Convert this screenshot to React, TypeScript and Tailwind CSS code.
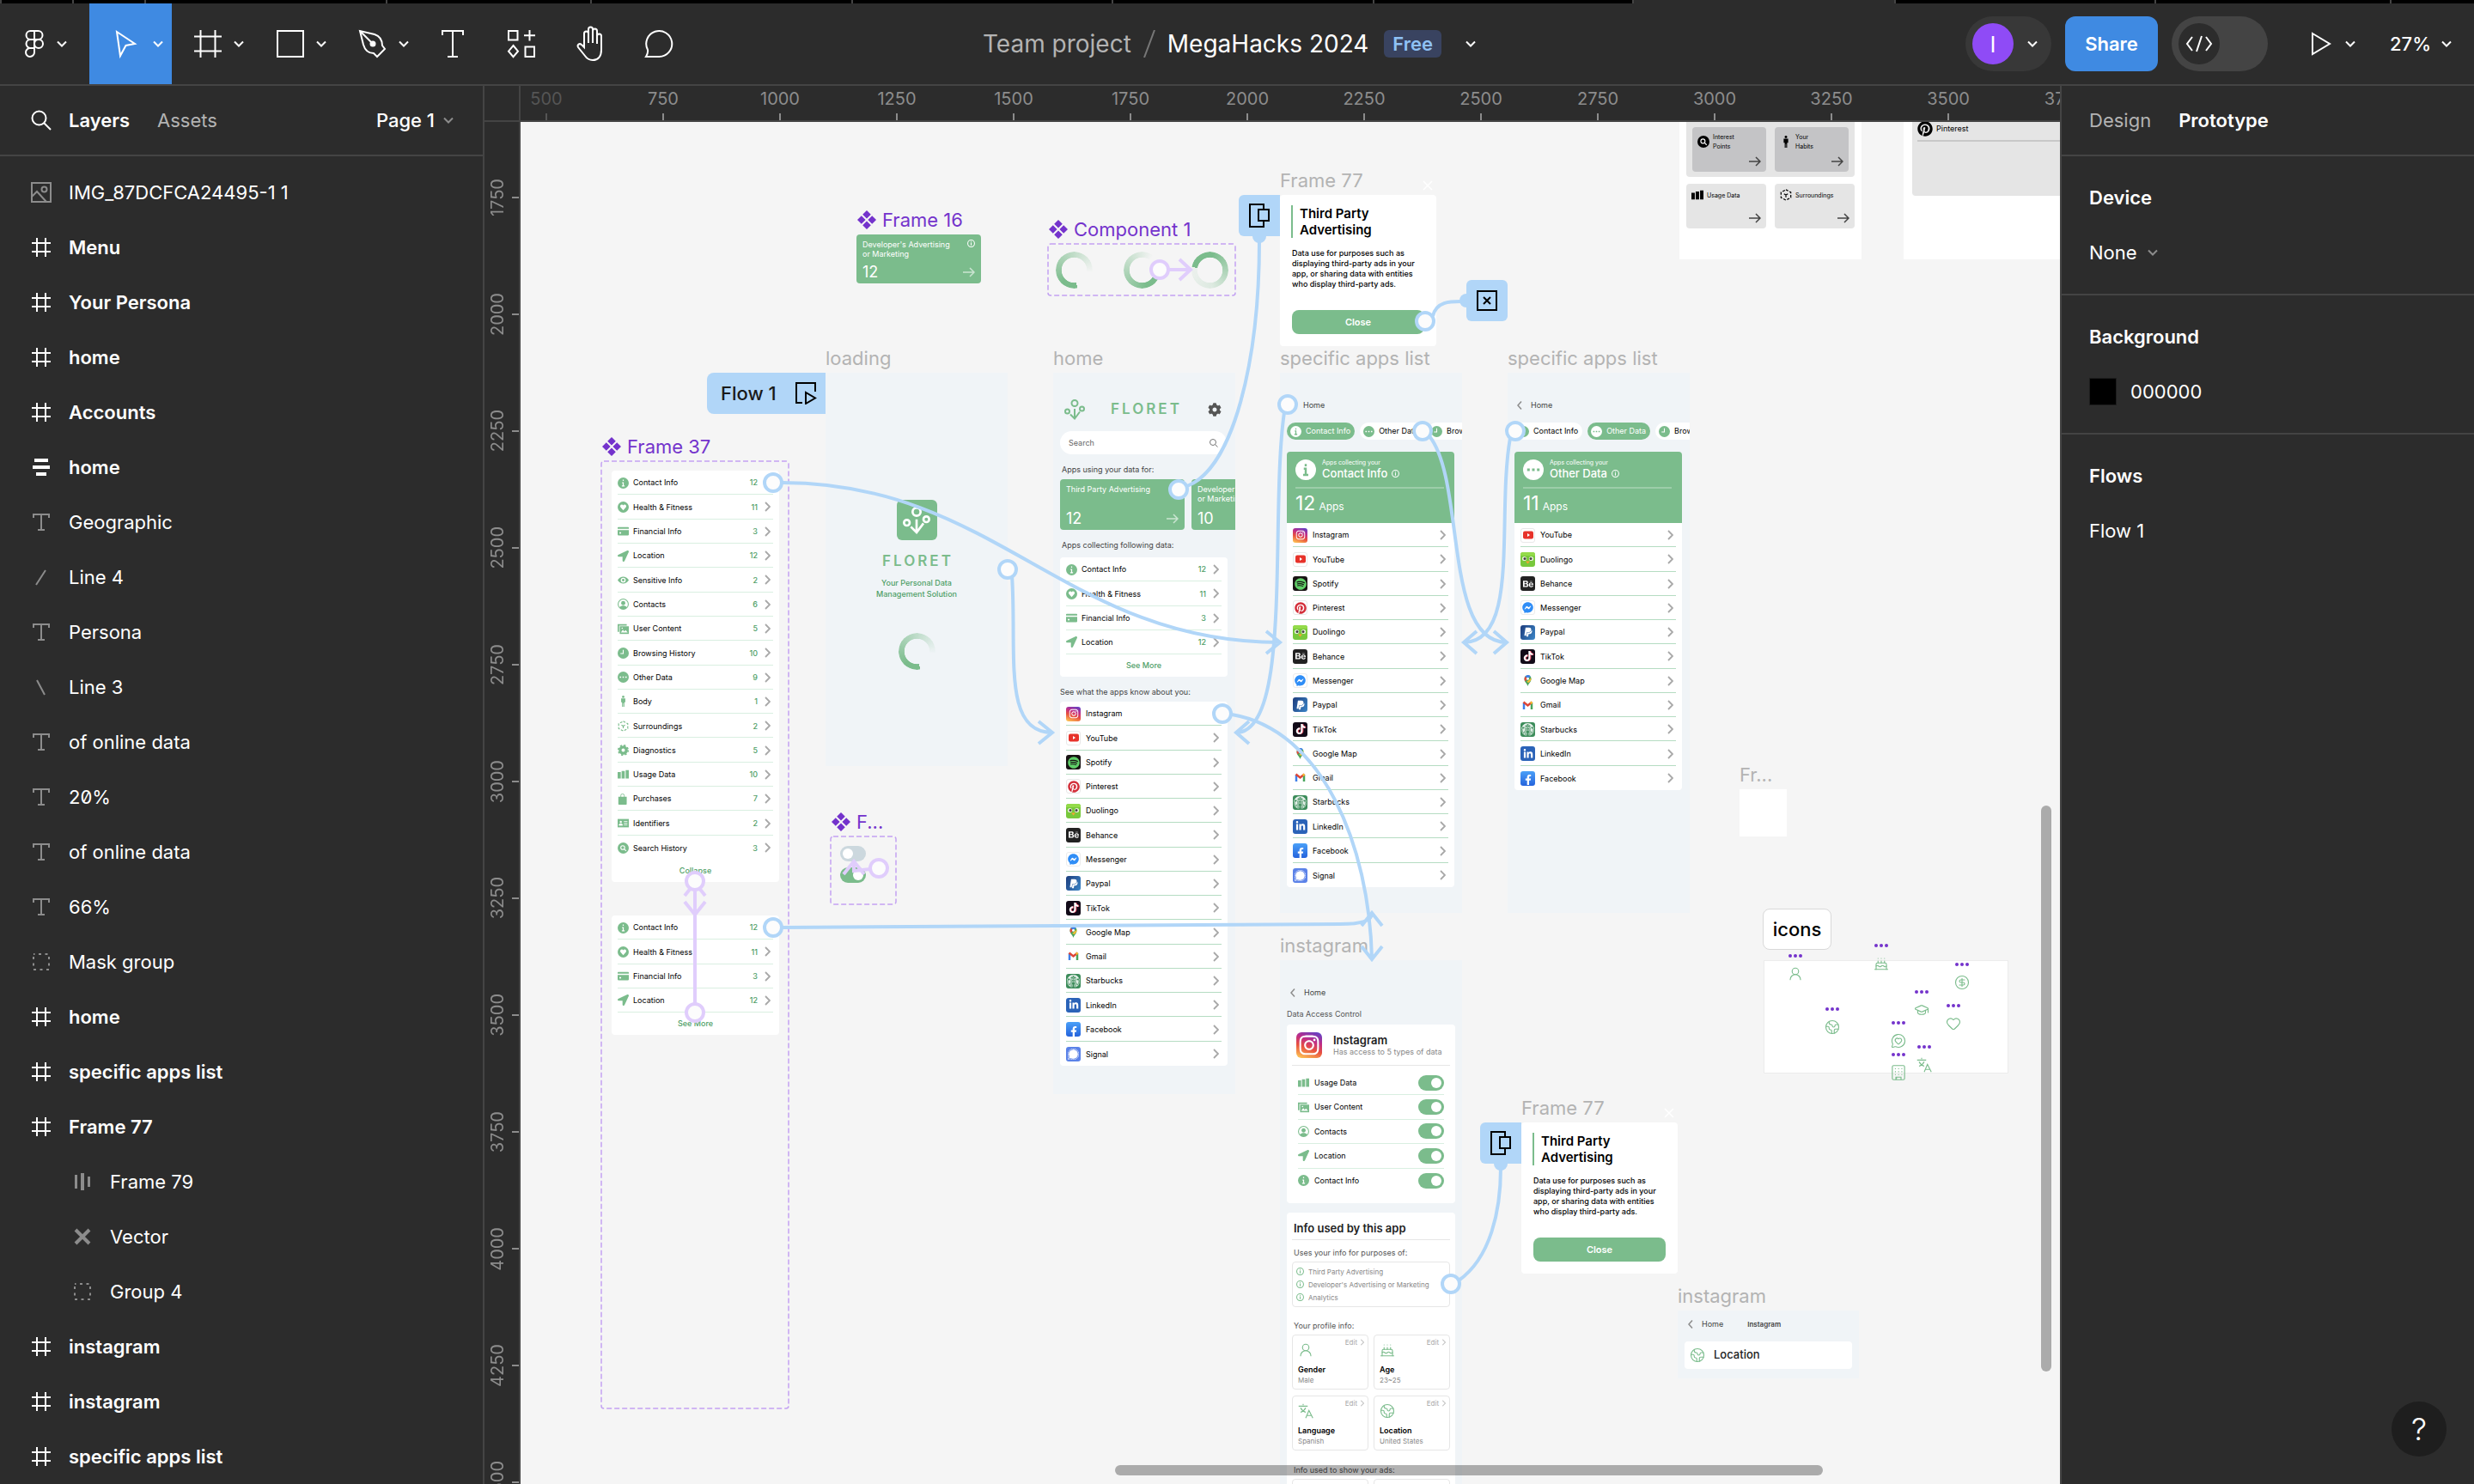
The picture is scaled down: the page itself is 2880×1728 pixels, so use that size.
import React, { useState } from 'react';
import {
  Cake, CircleDollarSign, Earth, GraduationCap, Heart, MessageCircleHeart, UserRound,
} from 'lucide-react';
import {
  FaBehance, FaCog, FaFacebookF, FaFacebookMessenger, FaInstagram, FaLinkedinIn,
  FaLocationArrow, FaPaypal, FaPinterest, FaSpotify, FaTiktok,
} from 'react-icons/fa';
import { SiSignal, SiStarbucks } from 'react-icons/si';

/* ---------- editor icons ---------- */

const Chevron = ({ className = 'text-white' }: { className?: string }) => (
  <svg className={`w-3 h-3 shrink-0 ${className}`} viewBox="0 0 12 12" fill="none" stroke="currentColor" strokeWidth="2">
    <path d="M1 3.500l5 5 5-5" />
  </svg>
);

const toolIcons: Record<string, React.ReactNode> = {
  figma: (
    <>
      <path d="M16 1h-4.500a5 5 0 0 0 0 10H16zM16 1h4.500a5 5 0 0 1 0 10H16zM16 11h-4.500a5 5 0 0 0 0 10H16z" />
      <path d="M11.500 21a5 5 0 1 0 4.500 5v-5z" />
      <circle cx="21" cy="16" r="5" />
    </>
  ),
  move: <path d="M6 2l21 14-10.500 2L10 30z" strokeLinejoin="miter" />,
  frame: <path d="M7.500 0v32M24.500 0v32M0 7.500h32M0 24.500h32" />,
  rect: <path d="M1 1h30v30H1z" />,
  pen: (
    <>
      <path d="M1 1l4 16c2 7 7 10 12 10l4 4 9-9-3-4c0-6-3-11-9-13z" />
      <path d="M1 1l14 14" />
      <circle cx="16" cy="16" r="2.500" fill="currentColor" />
    </>
  ),
  text: <path d="M4 6V1h24v5M16 1v30M10 31h12" />,
  resources: <path d="M1 1h10.500v10.500H1zM20.500 19.500H31V31H20.500zM25.500 0v12.500M19 6.200h13M6.500 18l5.500 6.700-5.500 6.500L1 24.700z" />,
  hand: (
    <path d="M9 20V4a2.500 2.500 0 0 1 5 0v11V-1a2.500 2.500 0 0 1 5 0v16V1a2.500 2.500 0 0 1 5 0v15V7a2.500 2.500 0 0 1 5 0v16c0 8-4 12-10 12-5 0-7-2-9-5L2 20c-1.500-3 1.500-5 4-3z" />
  ),
  comment: <path d="M1 31h15a15 15 0 1 0-13-8c.5 3 0 5-2 8z" />,
};

const ToolIcon = ({ name }: { name: string }) => (
  <svg className="w-8 h-8 shrink-0 overflow-visible" viewBox="0 0 32 32" fill="none" stroke="currentColor" strokeWidth="2">
    {toolIcons[name]}
  </svg>
);

const layerIcons: Record<string, React.ReactNode> = {
  image: (
    <g stroke="#8c8c8c">
      <path d="M1 1h22v22H1z" />
      <circle cx="15.500" cy="8.500" r="3" />
      <path d="M1 17l6-6 11 12" />
    </g>
  ),
  frame: <path d="M7 1v22M17 1v22M1 7h22M1 17h22" stroke="#fff" />,
  stack: <path d="M4 2h16v4H4zM2 10h20v4H2zM6 18h12v4H6z" fill="#fff" stroke="none" />,
  text: <path d="M3 7V3h18v4M12 3v18M8 21h8" stroke="#8c8c8c" />,
  line: <path d="M6 21L17 4" stroke="#8c8c8c" />,
  backline: <path d="M7 4l9 17" stroke="#8c8c8c" />,
  group: <path d="M3 3h18v18H3z" stroke="#8c8c8c" strokeDasharray="3 4.500" strokeDashoffset="1.500" />,
  bars: <path d="M3 4h3v16H3zM10 2h4v20h-4zM18 6h3v12h-3z" fill="#8c8c8c" stroke="none" />,
  vector: <path d="M4 4l16 16M20 4L4 20" stroke="#8c8c8c" strokeWidth="4" />,
};

const layers = [
  { icon: 'image', name: 'IMG_87DCFCA24495-1 1' },
  { icon: 'frame', name: 'Menu', bold: true },
  { icon: 'frame', name: 'Your Persona', bold: true },
  { icon: 'frame', name: 'home', bold: true },
  { icon: 'frame', name: 'Accounts', bold: true },
  { icon: 'stack', name: 'home', bold: true },
  { icon: 'text', name: 'Geographic' },
  { icon: 'line', name: 'Line 4' },
  { icon: 'text', name: 'Persona' },
  { icon: 'backline', name: 'Line 3' },
  { icon: 'text', name: 'of online data' },
  { icon: 'text', name: '20%' },
  { icon: 'text', name: 'of online data' },
  { icon: 'text', name: '66%' },
  { icon: 'group', name: 'Mask group' },
  { icon: 'frame', name: 'home', bold: true },
  { icon: 'frame', name: 'specific apps list', bold: true },
  { icon: 'frame', name: 'Frame 77', bold: true },
  { icon: 'bars', name: 'Frame 79', nested: true },
  { icon: 'vector', name: 'Vector', nested: true },
  { icon: 'group', name: 'Group 4', nested: true },
  { icon: 'frame', name: 'instagram', bold: true },
  { icon: 'frame', name: 'instagram', bold: true },
  { icon: 'frame', name: 'specific apps list', bold: true },
];

/* ---------- editor chrome ---------- */

const tools = [
  { name: 'frame', label: 'Frame' },
  { name: 'rect', label: 'Rectangle' },
  { name: 'pen', label: 'Pen' },
];
const plainTools = [
  { name: 'text', label: 'Text' },
  { name: 'resources', label: 'Resources' },
  { name: 'hand', label: 'Hand' },
  { name: 'comment', label: 'Comment' },
];

const Toolbar = () => (
  <header className="shrink-0 border-b-2 border-[#444]">
    {/* browser tabs edge */}
    <div className="flex h-1 bg-black" aria-hidden="true">
      <div className="flex-[83] border-l-2 border-[#444]" />
      <div className="flex-[82] border-l-2 border-[#444]" />
      <div className="flex-[282] border-l-2 border-[#444]" />
      <div className="flex-[238] border-l-2 border-[#444]" />
      <div className="flex-[304] border-l-2 border-[#444]" />
      <div className="flex-[304] border-l-2 border-[#444]" />
      <div className="flex-[304] border-l-2 border-[#444]" />
      <div className="flex-[303] border-l-2 border-[#444]" />
      <div className="flex-[305] bg-[#2c2c2c] border-l-2 border-[#444]" />
      <div className="flex-[304] border-l-2 border-[#444]" />
      <div className="flex-[274] border-l-2 border-[#444]" />
      <div className="flex-[97] border-l-2 border-[#444]" />
    </div>
    <div className="flex items-stretch h-[94px]">
      <div className="flex flex-1">
        <button aria-label="Main menu" className="w-[104px] pl-6 flex items-center gap-[10px]">
          <ToolIcon name="figma" /><Chevron />
        </button>
        <button aria-label="Move" className="w-24 pl-[26px] flex items-center gap-4 bg-[#3f8ae2]">
          <ToolIcon name="move" /><Chevron />
        </button>
        {tools.map(t => (
          <button key={t.name} aria-label={t.label} className="w-24 pl-[26px] flex items-center gap-[14px]">
            <ToolIcon name={t.name} /><Chevron />
          </button>
        ))}
        {plainTools.map(t => (
          <button key={t.name} aria-label={t.label} className="w-20 pr-0.5 flex items-center justify-center">
            <ToolIcon name={t.name} />
          </button>
        ))}
      </div>
      <div className="flex items-center text-[28px] pl-2">
        <a href="#project" className="text-[#b3b3b3]">Team project</a>
        <svg className="w-3.5 h-8 mx-3.5" viewBox="0 0 14 32" stroke="#777" strokeWidth="2"><path d="M13 0L1 32" /></svg>
        <span>MegaHacks 2024</span>
        <span className="ml-[18px] h-8 px-[10px] rounded-md bg-[#394360] text-[#8fc1f5] text-[22px] leading-8 font-semibold">Free</span>
        <button aria-label="File options" className="ml-7 flex"><Chevron /></button>
      </div>
      <div className="flex flex-1 items-center justify-end gap-4 pr-[26px]">
        <button aria-label="Account" className="w-[100px] h-16 pl-2 rounded-full bg-[#383838] flex items-center gap-4">
          <span className="w-12 h-12 rounded-full bg-[#8f4bf6] text-[26px] flex items-center justify-center">I</span>
          <Chevron />
        </button>
        <button className="w-[108px] h-16 rounded-xl bg-[#3f8ae2] text-[22px] font-semibold">Share</button>
        <button role="switch" aria-checked="false" aria-label="Dev mode" className="w-28 h-16 pl-2 rounded-full bg-[#444] flex items-center">
          <span className="w-12 h-12 rounded-full bg-[#2c2c2c] flex items-center justify-center">
            <svg className="w-8 h-5" viewBox="0 0 32 20" fill="none" stroke="#fff" strokeWidth="2"><path d="M8 2L2 10l6 8M24 2l6 8-6 8M19 1l-6 18" /></svg>
          </span>
        </button>
        <button aria-label="Present" className="ml-[34px] flex items-center gap-4">
          <svg className="w-6 h-7" viewBox="0 0 24 28" fill="none" stroke="#fff" strokeWidth="2"><path d="M2 2l20 12L2 26z" /></svg>
          <Chevron />
        </button>
        <button className="ml-6 flex items-center gap-3 text-[22px] font-medium">27%<Chevron /></button>
      </div>
    </div>
  </header>
);

const LayersPanel = () => (
  <aside className="w-[564px] shrink-0 border-r-2 border-[#444] overflow-hidden">
    <div className="flex items-center h-[82px] pl-9 pr-[34px] border-b-2 border-[#444]">
      <svg className="w-6 h-6" viewBox="0 0 24 24" fill="none" stroke="#fff" strokeWidth="2"><circle cx="9.500" cy="9.500" r="8" /><path d="M15 15l8 8" /></svg>
      <button className="ml-5 font-semibold">Layers</button>
      <button className="ml-8 text-[#b3b3b3]">Assets</button>
      <button className="ml-auto flex items-center gap-2.5 font-medium">Page 1<Chevron className="text-[#8c8c8c]" /></button>
    </div>
    <ul className="pt-2.5 slashed-zero">
      {layers.map((l, i) => (
        <li key={i}>
          <button className={`flex items-center w-full h-16 text-left ${l.nested ? 'pl-[84px]' : 'pl-9'}`}>
            <svg className="w-6 h-6 mr-5" viewBox="0 0 24 24" fill="none" strokeWidth="2">{layerIcons[l.icon]}</svg>
            <span className={l.bold ? 'font-semibold' : ''}>{l.name}</span>
          </button>
        </li>
      ))}
    </ul>
  </aside>
);

const PrototypePanel = () => (
  <aside className="w-[482px] shrink-0 border-l-2 border-[#444] flex flex-col">
    <div className="flex items-center h-[82px] px-8 gap-8 border-b-2 border-[#444]">
      <button className="text-[#b3b3b3]">Design</button>
      <button className="font-semibold">Prototype</button>
    </div>
    <section className="px-8 h-[162px] pt-4 border-b-2 border-[#444]">
      <label htmlFor="device" className="block h-16 leading-[64px] font-semibold">Device</label>
      <div className="flex items-center h-16">
        <select id="device" className="appearance-none bg-transparent outline-none mr-3"><option>None</option></select>
        <Chevron className="text-[#8c8c8c]" />
      </div>
    </section>
    <section className="px-8 h-[162px] pt-4 border-b-2 border-[#444]">
      <h2 className="h-16 leading-[64px] font-semibold">Background</h2>
      <div className="flex items-center h-16 gap-4"><span className="w-8 h-8 bg-black border border-[#1e1e1e]" />000000</div>
    </section>
    <section className="px-8 pt-4">
      <h2 className="h-16 leading-[64px] font-semibold">Flows</h2>
      <a href="#flow-1" className="block h-16 leading-[64px]">Flow 1</a>
    </section>
    <button aria-label="Help" className="mt-auto ml-auto mr-8 mb-8 w-16 h-16 rounded-full bg-[#1e1e1e] text-[36px] font-light">?</button>
  </aside>
);

const hTicks = ['500', '750', '1000', '1250', '1500', '1750', '2000', '2250', '2500', '2750', '3000', '3250', '3500', '3750'];
const vTicks = ['1750', '2000', '2250', '2500', '2750', '3000', '3250', '3500', '3750', '4000', '4250', '4500'];

/* ---------- canvas drawing helpers ---------- */

const Diamonds = () => (
  <svg className="w-[22px] h-[22px]" viewBox="0 0 22 22" fill="#7433cc">
    <path d="M11 0l4.800 4.800L11 9.600 6.200 4.800zM11 12.400l4.800 4.800L11 22l-4.800-4.800zM4.800 6.200L9.600 11l-4.800 4.800L0 11zM17.200 6.200L22 11l-4.800 4.800-4.800-4.800z" />
  </svg>
);

const FrameLabel = ({ children, component }: { children: string; component?: boolean }) => (
  <div className={`absolute left-0 bottom-full h-[34px] flex items-center gap-[7px] text-[22px] whitespace-nowrap ${component ? 'text-[#7433cc] pl-px' : 'text-[#b3b3b3]'}`}>
    {component && <Diamonds />}{children}
  </div>
);

/* dashed outline of a component set */
const DashedOutline = () => (
  <svg className="absolute left-0 top-0 w-full h-full overflow-visible">
    <rect width="100%" height="100%" rx="3" fill="none" stroke="#c3a1f2" strokeWidth="1.500" strokeDasharray="6 3" />
  </svg>
);

const glyphs: Record<string, React.ReactNode> = {
  info: <><circle cx="8" cy="8" r="8" /><path d="M8 3v2M6.500 7.500H8V12M6 12.200h4" stroke="#fff" strokeWidth="1.500" fill="none" /></>,
  heart: <><circle cx="8" cy="8" r="8" /><path d="M8 12.500L4 8a2.300 2.300 0 0 1 4-2.500A2.300 2.300 0 0 1 12 8z" fill="#fff" /></>,
  card: <><path d="M1 2h14a1 1 0 0 1 1 1v1.500H0V3a1 1 0 0 1 1-1zM0 6.500h16V13a1 1 0 0 1-1 1H1a1 1 0 0 1-1-1z" /><path d="M2.500 9.500H5v2H2.500z" fill="#fff" /></>,
  eye: <><path d="M0 8c4-6.500 12-6.500 16 0-4 6.500-12 6.500-16 0z" /><circle cx="8" cy="8" r="3.500" fill="#fff" /><circle cx="8" cy="8" r="1.800" /></>,
  contact: <><circle cx="8" cy="8" r="7.300" fill="none" stroke="currentColor" strokeWidth="1.300" /><circle cx="8" cy="6.500" r="3" /><path d="M2.500 12.500c3-3 8-3 11 0a7 7 0 0 1-11 0z" /></>,
  photos: <><path d="M0 1h13v2H2v9H0z" /><path d="M3 4h13v11H3z" /><path d="M4.500 13l3-4 2 2.500 2-2 3 3.500z" fill="#fff" /><circle cx="6.500" cy="6.800" r="1" fill="#fff" /></>,
  clock: <><circle cx="8" cy="8" r="8" /><path d="M8 3.500V8.500H4" stroke="#fff" strokeWidth="1.300" fill="none" /></>,
  dots: <><circle cx="8" cy="8" r="8" /><path d="M3 7h2v2H3zM7 7h2v2H7zM11 7h2v2h-2z" fill="#fff" /></>,
  person: <><circle cx="8" cy="1.800" r="1.700" /><path d="M5 4h6v5.500H9.600V16H8.300v-5h-.6v5H6.400V9.500H5z" /></>,
  cube: <g fill="none" stroke="currentColor" strokeWidth="1.400"><path d="M8 1l6.500 3.500v7L8 15l-6.500-3.500v-7z" strokeDasharray="3.500 2" /><path d="M5.500 6.500L8 8l2.500-1.500M8 8v3" /></g>,
  gear: <><circle cx="8" cy="8" r="4.500" fill="none" stroke="currentColor" strokeWidth="4" /><circle cx="8" cy="8" r="7" fill="none" stroke="currentColor" strokeWidth="2" strokeDasharray="2.750 2.750" /></>,
  bars: <path d="M0 5h4.500v9H0zM5.700 3.500h4.500V14H5.700zM11.500 2H16v12h-4.500z" />,
  bag: <><path d="M1 4.500h12V15a1 1 0 0 1-1 1H2a1 1 0 0 1-1-1z" /><path d="M4.500 5V3a2.500 2.500 0 0 1 5 0v2" fill="none" stroke="currentColor" /></>,
  id: <><path d="M0 2h16v12H0z" /><path d="M2 11c0-3 5-3 5 0zM9 5.500h5M9 8h5M9 10.500h5" stroke="#fff" fill="#fff" /><circle cx="4.500" cy="6" r="1.500" fill="#fff" /></>,
  search: <><circle cx="8" cy="8" r="8" /><circle cx="7.300" cy="7.300" r="2.800" fill="none" stroke="#fff" strokeWidth="1.300" /><path d="M9.300 9.300l3 3" stroke="#fff" strokeWidth="1.300" /></>,
};

const Glyph = ({ name, className = 'w-[13px] h-[13px] text-[#7bbc8c]' }: { name: string; className?: string }) => {
  if (name === 'location') return <FaLocationArrow className={`shrink-0 ${className}`} />;
  return <svg className={`shrink-0 ${className}`} viewBox="0 0 16 16" fill="currentColor">{glyphs[name]}</svg>;
};

/* white badge with a green sign, used on green backgrounds */
const Badge = ({ icon, className }: { icon: string; className: string }) => (
  <svg className={`shrink-0 ${className}`} viewBox="0 0 16 16">
    <circle cx="8" cy="8" r="8" fill="#fff" />
    {icon === 'info'
      ? <path d="M8 3.500v1.800M6.500 7.200H8V12M6 12h4" stroke="#7bbc8c" strokeWidth="1.600" fill="none" />
      : <path d="M3.200 7h2v2h-2zM7 7h2v2H7zM10.800 7h2v2h-2z" fill="#7bbc8c" />}
  </svg>
);

const InfoOutline = ({ className }: { className: string }) => (
  <svg className={className} viewBox="0 0 16 16" fill="none" stroke="currentColor" strokeWidth="1.800">
    <circle cx="8" cy="8" r="7" /><path d="M8 4v2M8 7v5" />
  </svg>
);

const RowArrow = () => (
  <svg className="w-[7px] h-3 shrink-0" viewBox="0 0 7 12" fill="none" stroke="#a8a8a8" strokeWidth="1.800"><path d="M1 1l5 5-5 5" /></svg>
);

const BackArrow = () => (
  <svg className="w-[6px] h-[10px]" viewBox="0 0 6 10" fill="none" stroke="#8c8c8c" strokeWidth="1.500"><path d="M5 0.500L1 5l4 4.500" /></svg>
);

const LongArrow = ({ className }: { className: string }) => (
  <svg className={`w-[14px] h-3 ${className}`} viewBox="0 0 14 12" fill="none" stroke="currentColor" strokeWidth="1.500"><path d="M0 6h13M8 1l5 5-5 5" /></svg>
);

const FloretMark = ({ className }: { className: string }) => (
  <svg className={className} viewBox="0 0 24 24" fill="none" stroke="currentColor" strokeWidth="2">
    <circle cx="12" cy="4.500" r="3.500" /><circle cx="3.500" cy="14" r="2.500" /><circle cx="20.500" cy="11" r="2.500" />
    <path d="M12 11v11M7 17.500l5 5 6-8" />
  </svg>
);

const GlobeIcon = ({ className }: { className: string }) => <Earth className={className} strokeWidth={1.500} />;

const TranslateIcon = ({ className }: { className: string }) => (
  <svg className={className} viewBox="0 0 24 24" fill="none" stroke="currentColor" strokeWidth="1.500">
    <path d="M1 4.500h14M8 1v2M4 7c2 4 5 6 8 7M12 7c-2 4-5 6-8 7M12 23l5-12 6 12M14 19h7" />
  </svg>
);

const BuildingIcon = ({ className }: { className: string }) => (
  <svg className={className} viewBox="0 0 24 24" fill="none" stroke="currentColor" strokeWidth="1.500">
    <rect x="2.500" y="1" width="19" height="22" rx="2" />
    <path d="M8 23v-4h8v4M9 22v-3" />
    <path d="M6.500 6h12M6.500 10.500h12M6.500 15h12" strokeDasharray="1.500 3.500" />
  </svg>
);

/* ---------- app logos ---------- */

const tile = 'w-[17px] h-[17px] rounded-[3px] shrink-0 flex items-center justify-center text-white text-[12px]';

const appLogos: Record<string, React.ReactNode> = {
  Instagram: <span className={`${tile} bg-[linear-gradient(20deg,#fdc254_5%,#e8503f_40%,#c02d87_65%,#5245cf)]`}><FaInstagram /></span>,
  YouTube: (
    <span className={`${tile} bg-white border border-[#e8e8e8]`}>
      <svg className="w-3 h-[10px]" viewBox="0 0 12 10"><rect width="12" height="9" y="0.500" rx="2" fill="#e7322a" /><path d="M5 3l3 2-3 2z" fill="#fff" /></svg>
    </span>
  ),
  Spotify: <span className={`${tile} bg-[#191414]`}><FaSpotify className="text-[#5fd068] text-[14px]" /></span>,
  Pinterest: <span className={`${tile} bg-white border border-[#e8e8e8]`}><FaPinterest className="text-[#d32f3a] text-[14px]" /></span>,
  Duolingo: (
    <svg className="w-[17px] h-[17px] shrink-0" viewBox="0 0 17 17">
      <rect width="17" height="17" rx="3" fill="#78c83c" /><path d="M0 4V3a3 3 0 0 1 3-3h11a3 3 0 0 1 3 3v1z" fill="#94db4a" />
      <circle cx="4.500" cy="7.500" r="2.600" fill="#e8f3d8" /><circle cx="12.500" cy="7.500" r="2.600" fill="#e8f3d8" />
      <circle cx="5" cy="7.500" r="1.500" fill="#444" /><circle cx="12" cy="7.500" r="1.500" fill="#444" /><path d="M6 10.500h5l-2.500 3z" fill="#f3a633" />
    </svg>
  ),
  Behance: <span className={`${tile} bg-[#222]`}><FaBehance /></span>,
  Messenger: <span className={`${tile} bg-white border border-[#ececec]`}><FaFacebookMessenger className="text-[#2f8df6] text-[13px]" /></span>,
  Paypal: <span className={`${tile} bg-[linear-gradient(120deg,#1d3c7c,#3b86c8)]`}><FaPaypal /></span>,
  TikTok: <span className={`${tile} bg-[#120b18]`}><FaTiktok className="drop-shadow-[1px_0_0_#e0425c]" /></span>,
  'Google Map': (
    <svg className="w-[17px] h-[17px] shrink-0" viewBox="0 0 17 17">
      <path d="M8.500 15c-.8-3.500-4-4.500-4-8.500a4 4 0 0 1 8 0c0 4-3.200 5-4 8.500z" fill="#49a45c" />
      <path d="M5.500 3.800a4 4 0 0 1 6.200-.5l-3.200 3.200z" fill="#3f80e8" /><path d="M5.500 3.800l3 2.700L5.300 9.500c-1-2-1-4.200.2-5.700z" fill="#e14a3c" />
      <path d="M12.500 5.500c.3 3-1.500 4-2.800 5.500L7 10z" fill="#f5bd32" /><circle cx="8.500" cy="6.300" r="1.500" fill="#fff" />
    </svg>
  ),
  Gmail: (
    <svg className="w-[17px] h-[17px] shrink-0" viewBox="0 0 17 17" fill="none" strokeWidth="2.500">
      <path d="M4 13V5" stroke="#3f80e8" /><path d="M13 13V5" stroke="#49a45c" /><path d="M3.500 4.500l5 4 5-4" stroke="#dd4637" /><path d="M11.700 6l1.800-1.500" stroke="#f5bd32" />
    </svg>
  ),
  Starbucks: <span className={`${tile} bg-[#3c8c5a]`}><SiStarbucks className="text-[15px] text-[#e6f0ea]" /></span>,
  LinkedIn: <span className={`${tile} bg-[#2b63b8]`}><FaLinkedinIn /></span>,
  Facebook: <span className={`${tile} bg-[linear-gradient(#4aa0f8,#2563dc)]`}><FaFacebookF className="mt-1" /></span>,
  Signal: <span className={`${tile} bg-[#5b82e8]`}><SiSignal className="text-[13px]" /></span>,
};

const appNames = ['Instagram', 'YouTube', 'Spotify', 'Pinterest', 'Duolingo', 'Behance', 'Messenger', 'Paypal', 'TikTok', 'Google Map', 'Gmail', 'Starbucks', 'LinkedIn', 'Facebook', 'Signal'];
const otherApps = ['YouTube', 'Duolingo', 'Behance', 'Messenger', 'Paypal', 'TikTok', 'Google Map', 'Gmail', 'Starbucks', 'LinkedIn', 'Facebook'];

const dataTypes = [
  { icon: 'info', name: 'Contact Info', count: 12 },
  { icon: 'heart', name: 'Health & Fitness', count: 11 },
  { icon: 'card', name: 'Financial Info', count: 3 },
  { icon: 'location', name: 'Location', count: 12 },
  { icon: 'eye', name: 'Sensitive Info', count: 2 },
  { icon: 'contact', name: 'Contacts', count: 6 },
  { icon: 'photos', name: 'User Content', count: 5 },
  { icon: 'clock', name: 'Browsing History', count: 10 },
  { icon: 'dots', name: 'Other Data', count: 9 },
  { icon: 'person', name: 'Body', count: 1 },
  { icon: 'cube', name: 'Surroundings', count: 2 },
  { icon: 'gear', name: 'Diagnostics', count: 5 },
  { icon: 'bars', name: 'Usage Data', count: 10 },
  { icon: 'bag', name: 'Purchases', count: 7 },
  { icon: 'id', name: 'Identifiers', count: 2 },
  { icon: 'search', name: 'Search History', count: 3 },
];

/* ---------- pieces of the mobile screens ---------- */

const DataCard = ({ rows, height, action }: { rows: typeof dataTypes; height: string; action: string }) => (
  <div className="w-[195px] px-[7px] rounded bg-white text-[9px] text-black">
    <ul className={`grid auto-rows-fr ${height}`}>
      {rows.map((r, i) => (
        <li key={r.name} className={i === 15 ? '' : 'border-b border-[#d9efe1]'}>
          <a href="#data" className="flex items-center h-full pt-px pr-[3px]">
            <Glyph name={r.icon} />
            <span className="ml-[5px]">{r.name}</span>
            <span className="ml-auto mr-2 font-medium text-[#4fa067]">{r.count}</span>
            <RowArrow />
          </a>
        </li>
      ))}
    </ul>
    <button className="block w-full h-[26px] text-center font-medium text-[#4fa067]">{action}</button>
  </div>
);

const AppList = ({ apps, height, rounded }: { apps: string[]; height: string; rounded: string }) => (
  <ul className={`grid auto-rows-fr w-[195px] px-[7px] bg-white text-[9px] text-black ${rounded} ${height}`}>
    {apps.map((a, i) => (
      <li key={a} className={i === apps.length - 1 ? '' : 'border-b border-[#b5dcc2]'}>
        <a href="#app" className="flex items-center h-full pt-px pr-[3px]">
          {appLogos[a]}
          <span className="ml-1.5">{a}</span>
          <span className="ml-auto"><RowArrow /></span>
        </a>
      </li>
    ))}
  </ul>
);

const PurposeCard = ({ title, count, info, className }: { title: React.ReactNode; count: number; info?: boolean; className: string }) => (
  <div className={`flex flex-col justify-between shrink-0 w-[145px] px-[7px] pt-[6px] pb-1 bg-[#7bbc8c] text-[9px] leading-[11px] text-white ${className}`}>
    <div className="flex justify-between">
      <span>{title}</span>
      {info && <InfoOutline className="w-[9px] h-[9px]" />}
    </div>
    <div className="flex items-center justify-between text-[18px] leading-[18px]">{count}<LongArrow className="opacity-60" /></div>
  </div>
);

const Chip = ({ icon, label, active }: { icon: string; label: string; active?: boolean }) => (
  <button className={`flex items-center gap-[5px] h-5 pl-1 pr-[5px] rounded-full whitespace-nowrap ${active ? 'bg-[#7bbc8c] text-white' : 'bg-white text-black'}`}>
    {active ? <Badge icon={icon} className="w-[13px] h-[13px]" /> : <Glyph name={icon} />}
    {label}
  </button>
);

const AppsScreen = ({ title, icon, apps, height }: { title: string; icon: string; apps: string[]; height: string }) => (
  <>
    <div className="overflow-hidden pl-2 text-[9px]">
      <a href="#home" className="flex items-center gap-2.5 h-4 mt-[30px] pl-[3px] text-[#444]"><BackArrow />Home</a>
      <div className="flex gap-1.5 mt-3">
        <Chip icon="info" label="Contact Info" active={icon === 'info'} />
        <Chip icon="dots" label="Other Data" active={icon === 'dots'} />
        <Chip icon="clock" label="Browsing" />
      </div>
    </div>
    <div className="ml-2 mt-3.5 w-[195px]">
      <div className="h-[83px] px-2.5 pt-2 rounded-t bg-[#7bbc8c] text-white">
        <div className="flex items-center gap-[7px] h-[26px]">
          <Badge icon={icon} className="w-6 h-6" />
          <div>
            <div className="text-[7px] leading-2">Apps collecting your</div>
            <div className="flex items-center gap-[5px] text-[13px] leading-4 font-medium">{title}<InfoOutline className="w-[9px] h-[9px]" /></div>
          </div>
        </div>
        <div className="mt-[7px] mr-0.5 border-t-2 border-white/25" />
        <div className="mt-[3px] text-[23px] leading-7">{apps.length === 15 ? 12 : 11}<span className="ml-1 text-[12px]">Apps</span></div>
      </div>
      <AppList apps={apps} height={height} rounded="rounded-b" />
    </div>
  </>
);

const AdvertisingModal = ({ className }: { className: string }) => (
  <div className={`absolute w-[182px] h-44 pl-[14px] pr-3.5 pt-3 rounded bg-white text-black ${className}`}>
    <FrameLabel>Frame 77</FrameLabel>
    <svg className="absolute right-1 bottom-full w-3 h-3 mb-[5px]" viewBox="0 0 12 12" stroke="#fff" strokeWidth="1.500"><path d="M1 1l10 10M11 1L1 11" /></svg>
    <h3 className="-ml-px pl-2 h-[38px] border-l-2 border-[#7bbc8c] text-[15px] leading-[19px] font-semibold">Third Party<br />Advertising</h3>
    <p className="mt-3 text-[9px] leading-3 font-medium whitespace-nowrap">
      Data use for purposes such as<br />displaying third-party ads in your<br />app, or sharing data with entities<br />who display third-party ads.
    </p>
    <button className="block w-[154px] h-7 mt-6 rounded-lg bg-[#7bbc8c] text-white text-[11px] font-semibold">Close</button>
    {/* overlay trigger tag */}
    <div className="absolute right-full top-0 w-12 h-12 rounded-l-md bg-[#b1d6f8] flex items-center justify-center">
      <svg className="w-6 h-7" viewBox="0 0 24 28" fill="none" stroke="#000" strokeWidth="2"><path d="M17 7V1H1v26h16v-7" /><path d="M11 7h12v13H11z" /></svg>
      <span className="absolute top-full left-4 w-4 h-2 rounded-b-full bg-[#b1d6f8]" />
    </div>
  </div>
);

const Toggle = ({ label, on, className = '' }: { label: string; on?: boolean; className?: string }) => {
  const [checked, setChecked] = useState(!!on);
  return (
    <input
      type="checkbox"
      aria-label={label}
      checked={checked}
      onChange={e => setChecked(e.target.checked)}
      className={`appearance-none block w-[30px] h-[18px] p-[3px] rounded-full bg-[#ccd8de] checked:bg-[#7bbc8c] checked:pl-[15px] before:block before:w-3 before:h-3 before:rounded-full before:bg-white ${className}`}
    />
  );
};

const Ring = ({ className }: { className: string }) => (
  <div className={`w-[43px] h-[43px] rounded-full [mask:radial-gradient(closest-side,transparent_67%,black_70%)] ${className}`} />
);

const ProfileTile = ({ icon, title, value }: { icon: React.ReactNode; title: string; value: string }) => (
  <div className="relative h-16 px-1.5 pt-2 rounded border border-[#e6e6e6] text-[9px] leading-3">
    <a href="#edit" className="absolute right-1 top-0.5 flex items-center gap-1 text-[8px] text-[#a8a8a8]">Edit<svg className="w-1 h-2" viewBox="0 0 4 8" fill="none" stroke="currentColor"><path d="M0 0.500L3.500 4 0 7.500" /></svg></a>
    <div className="h-[18px] mb-2 text-[#7bbc8c]">{icon}</div>
    <div className="font-semibold text-black">{title}</div>
    <div className="text-[8px] text-[#888]">{value}</div>
  </div>
);

const permissions = [
  { icon: 'bars', name: 'Usage Data' },
  { icon: 'photos', name: 'User Content' },
  { icon: 'contact', name: 'Contacts' },
  { icon: 'location', name: 'Location' },
  { icon: 'info', name: 'Contact Info' },
];

const InstagramFrame = () => (
  <div className="absolute left-[884px] top-[976px] w-[212px] h-[720px] px-2 bg-[#f0f4f7] text-[9px]">
    <FrameLabel>instagram</FrameLabel>
    <a href="#home" className="flex items-center gap-2.5 h-4 mt-[30px] pl-1 text-[#444]"><BackArrow />Home</a>
    <h3 className="h-4 mt-[9px] leading-4 text-[#555]">Data Access Control</h3>
    <section className="w-[196px] h-52 mt-1 px-1.5 rounded bg-white">
      <div className="flex items-center gap-[13px] h-12 pl-[5px] border-b border-[#e6e6e6]">
        <span className="w-[30px] h-[30px] rounded-md flex items-center justify-center text-white text-[26px] bg-[linear-gradient(20deg,#fdc254_5%,#e8503f_40%,#c02d87_65%,#5245cf)]"><FaInstagram /></span>
        <div>
          <div className="text-[13px] leading-4 font-semibold text-[#222]">Instagram</div>
          <div className="leading-3 text-[#888]">Has access to 5 types of data</div>
        </div>
      </div>
      <ul className="grid auto-rows-fr h-[142px] mt-1.5 px-[7px]">
        {permissions.map((p, i) => (
          <li key={p.name} className={`flex items-center text-black ${i === 4 ? '' : 'border-b border-[#d9efe1]'}`}>
            <Glyph name={p.icon} /><span className="ml-1.5">{p.name}</span>
            <Toggle label={p.name} on className="ml-auto" />
          </li>
        ))}
      </ul>
    </section>
    <section className="w-[196px] h-96 mt-[11px] px-1.5 rounded-t bg-white text-[#555]">
      <h3 className="h-8 pt-1.5 pl-0.5 border-b border-[#e6e6e6] text-[13px] leading-6 font-semibold text-[#222]">Info used by this app</h3>
      <h4 className="mt-[7px] pl-0.5 h-4 leading-4">Uses your info for purposes of:</h4>
      <ul className="h-[53px] mt-0.5 pl-1 py-[3px] rounded border border-[#e6e6e6] text-[8px] text-[#888]">
        {['Third Party Advertising', "Developer's Advertising or Marketing", 'Analytics'].map(t => (
          <li key={t} className="flex items-center gap-[5px] h-[15px] whitespace-nowrap"><InfoOutline className="w-[9px] h-[9px] text-[#7bbc8c]" />{t}</li>
        ))}
      </ul>
      <h4 className="mt-3.5 pl-0.5 h-4 leading-4">Your profile info:</h4>
      <div className="grid grid-cols-2 gap-x-1.5 gap-y-[7px] mt-0.5">
        <ProfileTile icon={<UserRound className="w-[18px] h-[18px]" strokeWidth={1.500} />} title="Gender" value="Male" />
        <ProfileTile icon={<Cake className="w-[18px] h-[18px]" strokeWidth={1.500} />} title="Age" value="23~25" />
        <ProfileTile icon={<TranslateIcon className="w-[18px] h-[18px]" />} title="Language" value="Spanish" />
        <ProfileTile icon={<GlobeIcon className="w-[18px] h-[18px]" />} title="Location" value="United States" />
      </div>
      <h4 className="mt-[15px] pl-0.5 h-4 leading-4">Info used to show your ads:</h4>
      <div className="grid grid-cols-2 gap-1.5 mt-0.5">
        <div className="h-16 rounded border border-[#e6e6e6]" />
        <div className="h-16 rounded border border-[#e6e6e6]" />
      </div>
    </section>
  </div>
);

const Dots = () => (
  <svg className="block w-4 h-1 mx-auto" viewBox="0 0 16 4" fill="#7433cc"><circle cx="2" cy="2" r="2" /><circle cx="8" cy="2" r="2" /><circle cx="14" cy="2" r="2" /></svg>
);

const IconSpot = ({ className, children }: { className: string; children: React.ReactNode }) => (
  <div className={`absolute w-[18px] text-[#7bbc8c] ${className}`}><Dots /><div className="mt-2.5">{children}</div></div>
);

const GrayTile = ({ icon, text, className }: { icon: string; text: React.ReactNode; className: string }) => (
  <div className={`flex flex-col justify-between h-[52px] p-1.5 rounded text-[7px] leading-[11px] text-black ${className}`}>
    <div className="flex items-center gap-1"><Glyph name={icon} className="w-[14px] h-[14px] text-black" /><span>{text}</span></div>
    <LongArrow className="self-end text-[#444]" />
  </div>
);

/* prototype links, in the coordinates of the whole window */
const links = [
  'M910 562C1160 562 1240 748 1490 748M1474 735l16 13-16 13',
  'M1178 670C1184 760 1166 853 1225 853M1209 840l16 13-16 13',
  'M1382 566C1436 545 1466 420 1466 280',
  'M1668 368C1672 350 1690 351 1703 351',
  'M1495 480C1478 600 1505 853 1439 853M1454 840l-15 13 15 13',
  'M1664 508C1706 560 1680 748 1754 748M1739 735l15 13-15 13',
  'M1758 510C1742 600 1770 748 1704 748M1719 735l-15 13 15 13',
  'M1434 832C1540 850 1594 985 1597 1116M1585 1102l12 15 12-15',
  'M910 1080L1560 1076Q1597 1076 1597 1064M1585 1078l12-15 12 15',
  'M1698 1491C1735 1465 1747 1410 1747 1360',
];
const ports = [[900, 562], [1173, 663], [1372, 570], [1659, 374], [1499, 471], [1656, 502], [1764, 502], [1423, 831], [900, 1080], [1689, 1495]];
const purpleLinks = [
  'M809 1036V1169M797 1043l12-15 12 15M797 1050l12 15 12-15',
  'M1360 314h25M1373 302l13 12-13 12',
  'M1013 1012L994 1014V1003M982 1018l12-15 12 15',
];
const purplePorts = [[809, 1026], [809, 1179], [1350, 314], [1023, 1011]];

const Canvas = () => (
  <main className="relative flex-1 overflow-hidden bg-[#f5f5f5]">
    {/* grayscale wireframes */}
    <div className="absolute left-[1349px] top-0 w-[212px] h-40 px-2 bg-white">
      <div className="grid grid-cols-2 gap-2.5 h-16 px-[7px] pt-1.5 rounded-b bg-[#e5e5e5]">
        <GrayTile icon="search" text={<>Interest<br />Points</>} className="bg-[#c4c4c6]" />
        <GrayTile icon="person" text={<>Your<br />Habits</>} className="bg-[#c4c4c6]" />
      </div>
      <div className="grid grid-cols-2 gap-2.5 mt-2">
        <GrayTile icon="bars" text="Usage Data" className="bg-[#e5e5e5]" />
        <GrayTile icon="cube" text="Surroundings" className="bg-[#e5e5e5]" />
      </div>
    </div>
    <div className="absolute left-[1610px] top-0 w-[212px] h-40 pl-2.5 bg-white">
      <div className="h-[86px] pl-1.5 rounded-b bg-[#e5e5e5]">
        <div className="flex items-center gap-1 h-[23px] pb-[5px] border-b-2 border-[#c8c8c8] text-[9px] text-black"><FaPinterest className="w-[18px] h-[18px]" />Pinterest</div>
      </div>
    </div>

    <div className="absolute left-[391px] top-[131px]">
      <FrameLabel component>Frame 16</FrameLabel>
      <PurposeCard title={<>Developer's Advertising<br />or Marketing</>} count={12} info className="h-[57px] rounded" />
    </div>

    <div className="absolute left-[614px] top-[142px] w-[218px] h-[60px] pl-[9px] pt-[9px] flex gap-9">
      <DashedOutline />
      <FrameLabel component>Component 1</FrameLabel>
      <Ring className="bg-[conic-gradient(from_170deg,#7bbc8c,#7bbc8c_15%,#7bbc8c00_80%)]" />
      <Ring className="bg-[conic-gradient(from_110deg,#7bbc8c,#7bbc8c_15%,#7bbc8c00_80%)]" />
      <Ring className="bg-[conic-gradient(from_280deg,#7bbc8c,#7bbc8c_25%,#7bbc8c30_70%,#7bbc8c10)]" />
    </div>

    <AdvertisingModal className="left-[884px] top-[85px]" />
    <div className="absolute left-[1101px] top-[184px] w-12 h-12 rounded-md bg-[#b1d6f8] flex items-center justify-center">
      <svg className="w-6 h-6" viewBox="0 0 24 24" fill="none" stroke="#000" strokeWidth="2"><path d="M1 1h22v22H1zM8 8l8 8M16 8l-8 8" /></svg>
      <span className="absolute right-full top-4 w-2 h-4 rounded-l-full bg-[#b1d6f8]" />
    </div>

    {/* list component */}
    <div className="absolute left-[94px] top-[395px] w-[218px] h-[1103px] pl-3 pt-[11px]">
      <DashedOutline />
      <FrameLabel component>Frame 37</FrameLabel>
      <DataCard rows={dataTypes} height="h-[453px]" action="Collapse" />
      <div className="mt-[39px]"><DataCard rows={dataTypes.slice(0, 4)} height="h-[113px]" action="See More" /></div>
    </div>

    <div className="absolute left-[217px] top-[292px] w-[138px] h-12 pl-4 pr-2.5 flex items-center justify-between rounded-l-lg bg-[#b1d6f8] text-[22px] font-medium text-[#1a1a1a]">
      Flow 1
      <svg className="w-[26px] h-[26px]" viewBox="0 0 26 26" fill="none" stroke="#000" strokeWidth="2"><path d="M9 24H2V1h22v10M13 12v13l11-6.500z" /></svg>
    </div>

    <div className="absolute left-[355px] top-[292px] w-[212px] h-[458px] pt-[148px] flex flex-col items-center bg-[#f0f4f7] text-[#4fa067]">
      <FrameLabel>loading</FrameLabel>
      <span className="w-[47px] h-[47px] rounded-md bg-[#7bbc8c] flex items-center justify-center"><FloretMark className="w-8 h-8 text-white" /></span>
      <span className="mt-3 pl-[3px] text-[17px] leading-6 font-semibold tracking-[3px] text-[#7bbc8c]">FLORET</span>
      <p className="mt-[7px] text-[9px] leading-[13px] font-medium text-center">Your Personal Data<br />Management Solution</p>
      <Ring className="mt-[39px] bg-[conic-gradient(from_170deg,#7bbc8c,#7bbc8c_15%,#7bbc8c00_80%)]" />
    </div>

    <div className="absolute left-[620px] top-[292px] w-[212px] h-[840px] pl-2 bg-[#f0f4f7] text-[9px]">
      <FrameLabel>home</FrameLabel>
      <div className="flex items-center justify-between h-14 mb-3 pt-[30px] pl-[5px] pr-4">
        <FloretMark className="w-6 h-6 text-[#7bbc8c]" />
        <span className="text-[17px] font-semibold tracking-[3px] text-[#7bbc8c]">FLORET</span>
        <FaCog className="w-4 h-4 text-[#555]" />
      </div>
      <label className="flex items-center w-[194px] h-[27px] px-2.5 rounded-full bg-white">
        <input placeholder="Search" aria-label="Search" className="w-full bg-transparent outline-none placeholder:text-[#666]" />
        <svg className="w-2.5 h-2.5 shrink-0" viewBox="0 0 10 10" fill="none" stroke="#777"><circle cx="4" cy="4" r="3.500" /><path d="M6.500 6.500L9.500 9.500" /></svg>
      </label>
      <h3 className="mt-2.5 pl-0.5 h-4 leading-4 text-[#444]">Apps using your data for:</h3>
      <div className="flex gap-2 mt-[3px] overflow-hidden">
        <PurposeCard title="Third Party Advertising" count={12} className="h-[59px] rounded" />
        <PurposeCard title={<>Developer's Advertising<br />or Marketing</>} count={10} className="h-[59px] rounded-l" />
      </div>
      <h3 className="mt-2.5 pl-0.5 h-4 leading-4 text-[#444]">Apps collecting following data:</h3>
      <div className="mt-1.5"><DataCard rows={dataTypes.slice(0, 4)} height="h-[113px]" action="See More" /></div>
      <h3 className="mt-2.5 mb-[3px] h-4 leading-4 text-[#444]">See what the apps know about you:</h3>
      <AppList apps={appNames} height="h-[424px]" rounded="rounded" />
    </div>

    <div className="absolute left-[884px] top-[292px] w-[212px] h-[629px] bg-[#f0f4f7]">
      <FrameLabel>specific apps list</FrameLabel>
      <AppsScreen title="Contact Info" icon="info" apps={appNames} height="h-[424px]" />
    </div>
    <div className="absolute left-[1149px] top-[292px] w-[212px] h-[629px] bg-[#f0f4f7]">
      <FrameLabel>specific apps list</FrameLabel>
      <AppsScreen title="Other Data" icon="dots" apps={otherApps} height="h-[311px]" />
    </div>

    {/* toggle component */}
    <div className="absolute left-[361px] top-[832px] w-[76px] h-[79px] pl-[11px] pt-[11px]">
      <DashedOutline />
      <FrameLabel component>F...</FrameLabel>
      <Toggle label="Off state" />
      <Toggle label="On state" on className="mt-[7px]" />
    </div>

    <InstagramFrame />
    <AdvertisingModal className="left-[1165px] top-[1165px]" />

    <div className="absolute left-[1347px] top-[1384px] w-[211px] h-[79px] px-2 pt-2 bg-[#f0f4f7] text-[9px] text-[#444]">
      <FrameLabel>instagram</FrameLabel>
      <div className="flex items-center h-4 pl-1">
        <a href="#home" className="flex items-center gap-2.5"><BackArrow />Home</a>
        <span className="ml-7 text-[8px] font-semibold">Instagram</span>
      </div>
      <div className="flex items-center gap-2.5 h-8 mt-3 pl-1.5 rounded bg-white text-[13px] font-medium text-[#222]"><GlobeIcon className="w-[18px] h-[18px] text-[#7bbc8c]" />Location</div>
    </div>

    <div className="absolute left-[1419px] top-[777px] w-[55px] h-[55px] bg-white"><FrameLabel>Fr...</FrameLabel></div>

    {/* icon section */}
    <div className="absolute left-[1446px] top-[916px] w-20 h-12 rounded-lg border border-[#d9d9d9] bg-white text-[22px] leading-[46px] font-medium text-center text-black">icons</div>
    <div className="absolute left-[1447px] top-[976px] w-[285px] h-[132px] border border-[#ececec] bg-white">
      <IconSpot className="left-[27px] -top-2"><UserRound className="w-[18px] h-[18px]" strokeWidth={1.500} /></IconSpot>
      <IconSpot className="left-[127px] -top-5"><Cake className="w-[18px] h-[18px]" strokeWidth={1.500} /></IconSpot>
      <IconSpot className="left-[221px] top-0.5"><CircleDollarSign className="w-[18px] h-[18px]" strokeWidth={1.500} /></IconSpot>
      <IconSpot className="left-[174px] top-[34px]"><GraduationCap className="w-[18px] h-[18px]" strokeWidth={1.500} /></IconSpot>
      <IconSpot className="left-[211px] top-[50px]"><Heart className="w-[18px] h-[18px]" strokeWidth={1.500} /></IconSpot>
      <IconSpot className="left-[70px] top-[54px]"><GlobeIcon className="w-[18px] h-[18px]" /></IconSpot>
      <IconSpot className="left-[147px] top-[70px]"><MessageCircleHeart className="w-[18px] h-[18px]" strokeWidth={1.500} /></IconSpot>
      <IconSpot className="left-[177px] top-[98px]"><TranslateIcon className="w-[18px] h-[18px]" /></IconSpot>
      <IconSpot className="left-[147px] top-[107px]"><BuildingIcon className="w-[18px] h-[18px]" /></IconSpot>
    </div>

    <svg className="absolute left-0 top-0 w-[1792px] h-[1586px] pointer-events-none" viewBox="606 142 1792 1586" fill="none" strokeWidth="4">
      <g stroke="#b1d6f8">
        {links.map(d => <path key={d} d={d} />)}
        {ports.map(([x, y]) => <circle key={`${x}-${y}`} cx={x} cy={y} r="10" fill="#fcfcfc" />)}
      </g>
      <g stroke="#e0cdfc">
        {purpleLinks.map(d => <path key={d} d={d} />)}
        {purplePorts.map(([x, y]) => <circle key={`${x}-${y}`} cx={x} cy={y} r="10" fill="#fcfcfc" />)}
      </g>
    </svg>

    {/* scrollbars */}
    <div className="absolute right-2.5 top-[796px] w-3 h-[659px] rounded-full bg-black/30" />
    <div className="absolute left-[692px] bottom-2.5 w-[824px] h-3 rounded-full bg-black/30" />
  </main>
);

const Workspace = () => (
  <div className="flex-1 min-w-0 flex flex-col text-[20px] text-[#8c8c8c]">
    <div className="flex shrink-0 h-[42px] border-b-2 border-[#444]">
      <div className="w-[42px] shrink-0 border-r-2 border-[#444]" />
      <div className="flex-1 overflow-hidden">
        <div className="flex -ml-[38px]">
          {hTicks.map((t, i) => (
            <div key={t} className={`w-[136px] shrink-0 h-10 flex flex-col items-center justify-between ${i === 0 ? 'text-[#555]' : ''}`}>
              <span className="leading-[30px]">{t}</span>
              <span className="w-0.5 h-2 bg-current" />
            </div>
          ))}
        </div>
      </div>
    </div>
    <div className="flex flex-1 min-h-0">
      <div className="w-[42px] shrink-0 pt-5 overflow-hidden border-r-2 border-[#444]">
        {vTicks.map(t => (
          <div key={t} className="h-[136px] flex items-center justify-between">
            <span className="leading-[30px] rotate-180 [writing-mode:vertical-rl]">{t}</span>
            <span className="w-2 h-0.5 bg-current" />
          </div>
        ))}
      </div>
      <Canvas />
    </div>
  </div>
);

export default function App() {
  return (
    <div className="flex flex-col h-screen overflow-hidden bg-[#2c2c2c] text-white text-[22px] font-['Inter',sans-serif]">
      <Toolbar />
      <div className="flex flex-1 min-h-0">
        <LayersPanel />
        <Workspace />
        <PrototypePanel />
      </div>
    </div>
  );
}
